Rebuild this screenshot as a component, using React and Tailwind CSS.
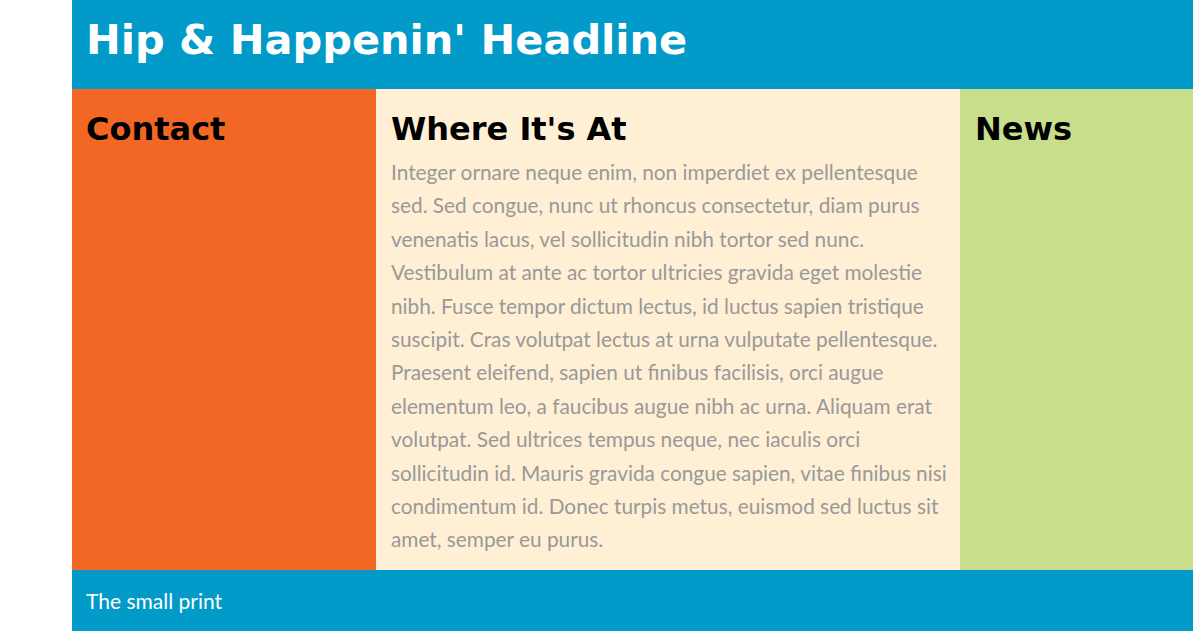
import React from 'react';

const lines = [
  'Integer ornare neque enim, non imperdiet ex pellentesque',
  'sed. Sed congue, nunc ut rhoncus consectetur, diam purus',
  'venenatis lacus, vel sollicitudin nibh tortor sed nunc.',
  'Vestibulum at ante ac tortor ultricies gravida eget molestie',
  'nibh. Fusce tempor dictum lectus, id luctus sapien tristique',
  'suscipit. Cras volutpat lectus at urna vulputate pellentesque.',
  'Praesent eleifend, sapien ut finibus facilisis, orci augue',
  'elementum leo, a faucibus augue nibh ac urna. Aliquam erat',
  'volutpat. Sed ultrices tempus neque, nec iaculis orci',
  'sollicitudin id. Mauris gravida congue sapien, vitae finibus nisi',
  'condimentum id. Donec turpis metus, euismod sed luctus sit',
  'amet, semper eu purus.',
];

const heading = "font-['DejaVu_Sans','Liberation_Sans',sans-serif] font-bold text-[32px] leading-[38px] text-black";

const App = () => {
  return (
    <div className="bg-white min-h-[637px] pl-[72px] font-['Lato','Liberation_Sans',sans-serif]">
      <header className="bg-[#029ac8] h-[89px] flex items-center px-[14px] pb-[9px]">
        <h1 className="text-white font-['DejaVu_Sans','Liberation_Sans',sans-serif] font-bold text-[41.5px] leading-none">
          Hip &amp; Happenin' Headline
        </h1>
      </header>

      <main className="grid grid-cols-[304px_584px_1fr]">
        <section className="bg-[#f26724] px-[14px] pt-[21px]">
          <h2 className={heading}>Contact</h2>
        </section>

        <section className="bg-[#ffefd5] pl-[15px] pr-[10px] pt-[21px] pb-[14px]">
          <h2 className={heading}>Where It's At</h2>
          <p className="mt-[7px] text-[20.8px] leading-[33.4px] text-[#999999] whitespace-nowrap">
            {lines.map((l, i) => (
              <React.Fragment key={i}>
                {l}
                {i < lines.length - 1 && <br />}
              </React.Fragment>
            ))}
          </p>
        </section>

        <section className="bg-[#c8de8b] px-[15px] pt-[21px]">
          <h2 className={heading}>News</h2>
        </section>
      </main>

      <footer className="bg-[#029ac8] h-[61px] flex items-center px-[14px]">
        <p className="text-white text-[21px] leading-none">The small print</p>
      </footer>
    </div>
  );
};

export default App;
